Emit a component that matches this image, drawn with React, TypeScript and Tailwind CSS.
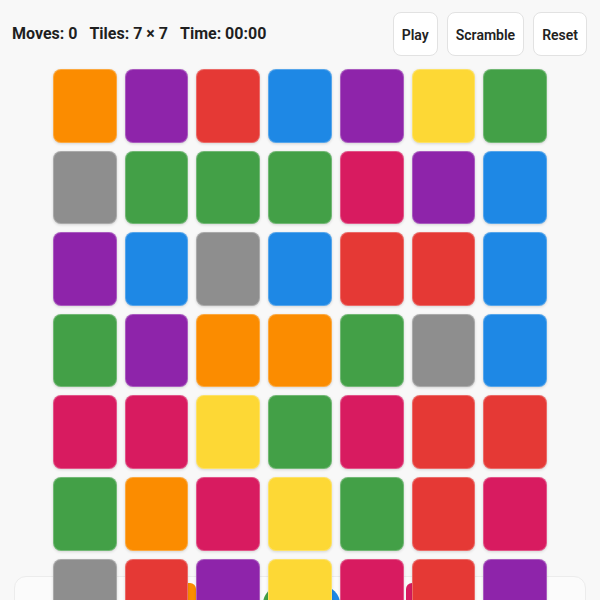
import React from 'react';

const COLORS: Record<string, string> = {
  O: 'bg-[#fb8c00]',
  P: 'bg-[#8e24aa]',
  R: 'bg-[#e53935]',
  B: 'bg-[#1e88e5]',
  Y: 'bg-[#fdd835]',
  G: 'bg-[#43a047]',
  K: 'bg-[#d81b60]',
  X: 'bg-[#8e8e8e]',
};

const BOARD = [
  'OPRBPYG',
  'XGGGKPB',
  'PBXBRRB',
  'GPOOGXB',
  'KKYGKRR',
  'GOKYGRK',
  'XRPYKRP',
];

export default function App() {
  return (
    <div className="h-[600px] w-[600px] overflow-hidden bg-[#f8f8f8] font-['Roboto','Liberation_Sans',sans-serif] text-[#1f1f1f]">
      <div className="flex items-center justify-between pl-3 pr-[13px] pt-3">
        <div className="flex gap-3 text-base font-bold">
          <span>Moves: 0</span>
          <span>Tiles: 7 × 7</span>
          <span>Time: 00:00</span>
        </div>
        <div className="flex gap-[9px]">
          <Button label="Play" />
          <Button label="Scramble" />
          <Button label="Reset" />
        </div>
      </div>

      <div className="relative z-10 mx-auto mt-[13px] grid w-[494px] grid-cols-7 gap-x-2 gap-y-2">
        {BOARD.flatMap((row, r) =>
          row.split('').map((c, i) => (
            <div
              key={`${r}-${i}`}
              className={`h-[73.6px] rounded-lg border border-white/25 shadow-[0_1px_3px_rgba(0,0,0,0.14)] ${COLORS[c]}`}
            />
          ))
        )}
      </div>

      <div className="mx-[14px] -mt-[56px] h-[80px] rounded-xl border border-[#ececec] bg-[#fbfbfb] pt-[6px]">
        <div className="flex items-start">
          <div className="ml-[141px] h-10 w-10 rounded-md bg-[#fb8c00]" />
          <div className="ml-[67px] mt-[3px] h-9 w-9 rounded-full bg-[#43a047]" />
          <div className="ml-[5px] mt-[3px] h-9 w-9 rounded-full bg-[#1e88e5]" />
          <div className="ml-[66px] h-10 w-10 rounded-md bg-[#d81b60]" />
        </div>
      </div>
    </div>
  );
}

function Button({ label }: { label: string }) {
  return (
    <button className="rounded-lg border border-[#e2e2e2] bg-white px-[8px] pt-[12px] pb-[10px] text-sm leading-5 font-semibold text-[#222]">
      {label}
    </button>
  );
}
